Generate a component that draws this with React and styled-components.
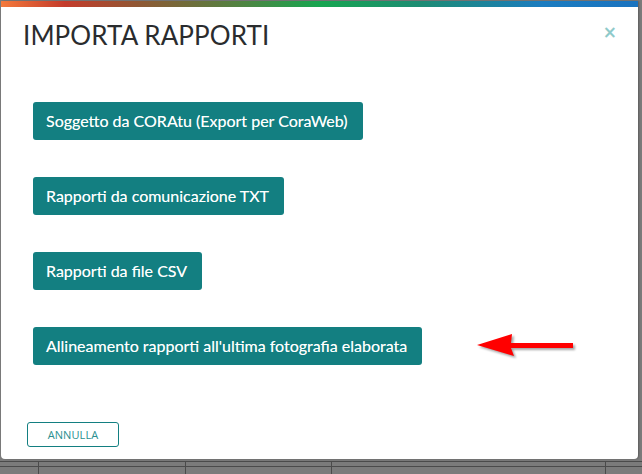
import React from "react";
import styled, { createGlobalStyle } from "styled-components";

const GlobalStyle = createGlobalStyle`
  html, body {
    margin: 0;
    padding: 0;
    background: #7b7b7b;
    overflow: hidden;
  }
  * {
    box-sizing: border-box;
  }
`;

const Page = styled.div`
  width: 642px;
  height: 474px;
  padding-top: 1px;
  padding-left: 1px;
  background: #7b7b7b;
  overflow: hidden;
`;

const Modal = styled.div`
  width: 637px;
  height: 458px;
  background: #ffffff;
  border-radius: 0 0 4px 4px;
  box-shadow: 1px 0 2px rgba(0, 0, 0, 0.25);
  display: flex;
  flex-direction: column;
  overflow: hidden;
`;

const TopBar = styled.div`
  height: 6px;
  flex-shrink: 0;
  background: linear-gradient(
    to right,
    #f47a3c 0%,
    #c43b2b 10%,
    #8e5934 22%,
    #4f8542 38%,
    #17a650 50%,
    #1d8c74 66%,
    #1b7cc0 85%,
    #1a73bf 100%
  );
`;

const Header = styled.div`
  display: flex;
  justify-content: space-between;
  align-items: flex-start;
  padding: 13px 21px 0 22px;
`;

const Title = styled.h1`
  margin: 0;
  font-family: Lato, "Open Sans", sans-serif;
  font-weight: 400;
  font-size: 26px;
  line-height: 31px;
  color: #2a2c2e;
  letter-spacing: 0.1px;
`;

const Close = styled.button`
  border: none;
  background: none;
  padding: 0;
  margin-top: 2px;
  font-family: "DejaVu Sans", sans-serif;
  font-weight: 700;
  font-size: 17px;
  line-height: 20px;
  color: #8fcaca;
  cursor: pointer;
`;

const Body = styled.div`
  display: flex;
  flex-direction: column;
  align-items: flex-start;
  gap: 37px;
  margin-top: 51px;
  padding-left: 32px;
`;

const Row = styled.div`
  display: flex;
  align-items: center;
  gap: 53px;
`;

const ActionButton = styled.button`
  border: none;
  border-radius: 3px;
  background: #137f81;
  color: #ffffff;
  font-family: Lato, "Open Sans", sans-serif;
  font-size: 16px;
  font-weight: 400;
  line-height: 20px;
  padding: 9px 15px 9px 13px;
  cursor: pointer;
  white-space: nowrap;
  -webkit-font-smoothing: antialiased;
  text-shadow: 0 0 0.3px rgba(255, 255, 255, 0.6);
`;

const Footer = styled.div`
  margin-top: auto;
  padding: 0 26px 12px;
`;

const CancelButton = styled.button`
  width: 92px;
  height: 25px;
  border: 1px solid #137f81;
  border-radius: 3px;
  background: #ffffff;
  color: #2a8f90;
  font-family: "Open Sans", sans-serif;
  font-size: 11px;
  line-height: 23px;
  padding: 0;
  letter-spacing: 0.1px;
  cursor: pointer;
`;

const TableStrip = styled.div`
  margin-top: 2px;
  margin-left: -1px;
`;

const TableRow = styled.div`
  display: grid;
  grid-template-columns: 38px 147px 146px 274px 1fr;
  height: ${(p) => p.h}px;
  border-top: 1px solid #4b4b4b;
`;

const Cell = styled.div`
  border-left: ${(p) => (p.first ? "none" : "1px solid #4b4b4b")};
`;

const Arrow = () => (
  <svg
    width="104"
    height="28"
    viewBox="0 0 104 28"
    style={{ filter: "drop-shadow(2px 2px 1.2px rgba(0,0,0,0.35))" }}
  >
    <path
      d="M2 13 L37 2 L36 11 L98 11 L98 16 L36 16 L39 24 Z"
      fill="#ff0000"
    />
  </svg>
);

const actions = [
  "Soggetto da CORAtu (Export per CoraWeb)",
  "Rapporti da comunicazione TXT",
  "Rapporti da file CSV",
];

const cols = [0, 1, 2, 3, 4];

export default function App() {
  return (
    <Page>
      <GlobalStyle />
      <Modal>
        <TopBar />
        <Header>
          <Title>IMPORTA RAPPORTI</Title>
          <Close aria-label="Chiudi">×</Close>
        </Header>
        <Body>
          {actions.map((a) => (
            <ActionButton key={a}>{a}</ActionButton>
          ))}
          <Row>
            <ActionButton>
              Allineamento rapporti all'ultima fotografia elaborata
            </ActionButton>
            <Arrow />
          </Row>
        </Body>
        <Footer>
          <CancelButton>ANNULLA</CancelButton>
        </Footer>
      </Modal>
      <TableStrip>
        <TableRow h={5}>
          {cols.map((c) => (
            <Cell key={c} first={c === 0} />
          ))}
        </TableRow>
        <TableRow h={10}>
          {cols.map((c) => (
            <Cell key={c} first={c === 0} />
          ))}
        </TableRow>
      </TableStrip>
    </Page>
  );
}
